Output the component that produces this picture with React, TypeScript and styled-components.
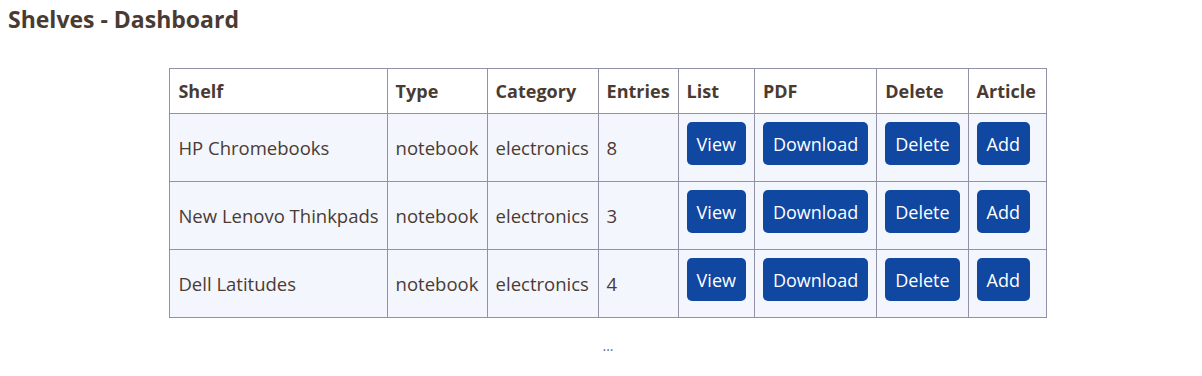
import styled, { createGlobalStyle } from 'styled-components';

const GlobalStyle = createGlobalStyle`
  body {
    margin: 0;
    background: #ffffff;
    font-family: 'Open Sans', 'Noto Sans', sans-serif;
    color: #4a3b33;
  }
`;

const Page = styled.div`
  padding: 0 8px;
`;

const Title = styled.h1`
  margin: 0;
  padding-top: 4px;
  font-size: 23px;
  line-height: 30px;
  font-weight: 700;
  color: #4a3b32;
`;

const Content = styled.div`
  display: flex;
  flex-direction: column;
  align-items: center;
  padding-left: 14px;
  margin-top: 34px;
`;

const Table = styled.table`
  border-collapse: collapse;
  font-size: 18.5px;
`;

const HeadCell = styled.th<{ w: number }>`
  width: ${({ w }) => w}px;
  box-sizing: border-box;
  border: 1px solid #9191a8;
  background: #ffffff;
  padding: 0 8px;
  height: 45px;
  text-align: left;
  font-size: 18px;
  font-weight: 700;
  color: #4a3b32;
  white-space: nowrap;
`;

const Row = styled.tr`
  background: #f3f6fd;
`;

const Cell = styled.td`
  border: 1px solid #9191a8;
  padding: 0 8px;
  height: 68px;
  box-sizing: border-box;
  vertical-align: middle;
  white-space: nowrap;
`;

const Button = styled.button`
  font-family: inherit;
  font-size: 18px;
  color: #ffffff;
  background: #0f47a1;
  border: none;
  border-radius: 5px;
  height: 43px;
  padding: 0 10px;
  margin-bottom: 8px;
  cursor: pointer;
  display: block;
`;

const More = styled.div`
  margin-top: 18px;
  font-size: 14px;
  color: #5a6f9a;
`;

type Shelf = { name: string; type: string; category: string; entries: number };

const shelves: Shelf[] = [
  { name: 'HP Chromebooks', type: 'notebook', category: 'electronics', entries: 8 },
  { name: 'New Lenovo Thinkpads', type: 'notebook', category: 'electronics', entries: 3 },
  { name: 'Dell Latitudes', type: 'notebook', category: 'electronics', entries: 4 },
];

const columns: [string, number][] = [
  ['Shelf', 217],
  ['Type', 100],
  ['Category', 111],
  ['Entries', 80],
  ['List', 76],
  ['PDF', 122],
  ['Delete', 91],
  ['Article', 78],
];

export default function App() {
  return (
    <Page>
      <GlobalStyle />
      <Title>Shelves - Dashboard</Title>
      <Content>
        <Table>
          <thead>
            <tr>
              {columns.map(([label, w]) => (
                <HeadCell key={label} w={w}>{label}</HeadCell>
              ))}
            </tr>
          </thead>
          <tbody>
            {shelves.map((s) => (
              <Row key={s.name}>
                <Cell>{s.name}</Cell>
                <Cell>{s.type}</Cell>
                <Cell>{s.category}</Cell>
                <Cell>{s.entries}</Cell>
                <Cell><Button>View</Button></Cell>
                <Cell><Button>Download</Button></Cell>
                <Cell><Button>Delete</Button></Cell>
                <Cell><Button>Add</Button></Cell>
              </Row>
            ))}
          </tbody>
        </Table>
        <More>...</More>
      </Content>
    </Page>
  );
}
